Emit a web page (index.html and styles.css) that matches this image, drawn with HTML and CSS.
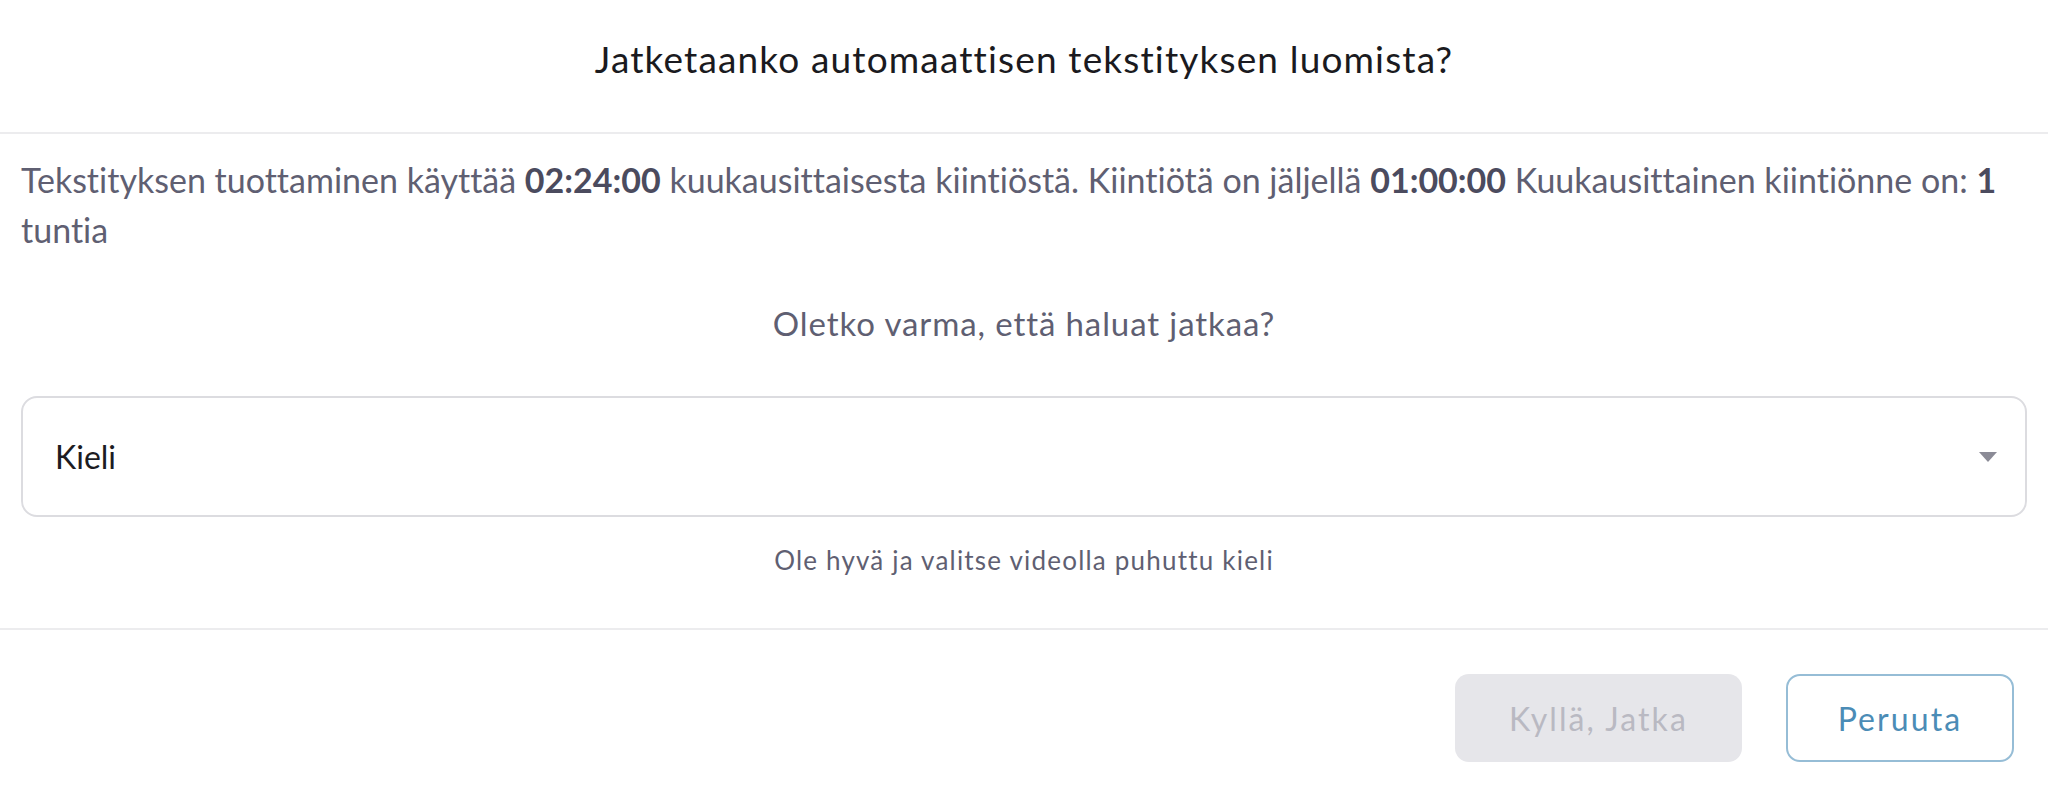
FILE: index.html
```html
<!DOCTYPE html>
<html lang="fi">
<head>
<meta charset="utf-8">
<title>Jatketaanko automaattisen tekstityksen luomista?</title>
<link rel="stylesheet" href="styles.css">
</head>
<body>
<div class="dialog">
  <header class="dialog-header">
    <h1 class="dialog-title">Jatketaanko automaattisen tekstityksen luomista?</h1>
  </header>
  <section class="dialog-body">
    <p class="quota-text">Tekstityksen tuottaminen käyttää <b>02:24:00</b> kuukausittaisesta kiintiöstä. Kiintiötä on jäljellä <b>01:00:00</b> Kuukausittainen kiintiönne on: <b>1</b> tuntia</p>
    <p class="confirm-text">Oletko varma, että haluat jatkaa?</p>
    <div class="select">
      <span class="select-label">Kieli</span>
      <svg class="select-arrow" width="18" height="10" viewBox="0 0 18 10"><path d="M0 0 H18 L9 10 Z" fill="#8b8b96"/></svg>
    </div>
    <p class="helper-text">Ole hyvä ja valitse videolla puhuttu kieli</p>
  </section>
  <footer class="dialog-footer">
    <button class="btn btn-disabled" disabled>Kyllä, Jatka</button>
    <button class="btn btn-outline">Peruuta</button>
  </footer>
</div>
</body>
</html>
```
FILE: styles.css
```css
html, body {
  margin: 0;
  padding: 0;
  background: #ffffff;
}
body {
  font-family: Lato, "Open Sans", sans-serif;
  font-variant-ligatures: none;
}
.dialog {
  width: 2048px;
  height: 797px;
  display: flex;
  flex-direction: column;
}
.dialog-header {
  height: 134px;
  box-sizing: border-box;
  padding-top: 37px;
  border-bottom: 2px solid #ececee;
  text-align: center;
}
.dialog-title {
  margin: 0;
  font-size: 37px;
  line-height: 44px;
  font-weight: 400;
  letter-spacing: 1.15px;
  color: #1a1a20;
}
.dialog-body {
  padding: 21px 21px 51px 21px;
  border-bottom: 2px solid #ececee;
}
.quota-text {
  margin: 0;
  font-size: 34px;
  line-height: 50px;
  font-weight: 400;
  color: #5f5f72;
}
.quota-text b {
  font-weight: 700;
  color: #4b4b5e;
}
.confirm-text {
  margin: 43px 0 0 0;
  text-align: center;
  font-size: 33px;
  line-height: 50px;
  letter-spacing: 0.9px;
  color: #5f5f72;
}
.select {
  margin-top: 48px;
  height: 121px;
  box-sizing: border-box;
  border: 2px solid #dcdce0;
  border-radius: 16px;
  display: flex;
  align-items: center;
  justify-content: space-between;
  padding: 0 28px 0 32px;
}
.select-label {
  font-size: 32px;
  color: #1c1c22;
}
.helper-text {
  margin: 26px 0 0 0;
  text-align: center;
  font-size: 26px;
  line-height: 34px;
  letter-spacing: 1.2px;
  color: #5f5f72;
}
.dialog-footer {
  display: flex;
  justify-content: flex-end;
  gap: 44px;
  padding: 44px 34px 0 0;
}
.btn {
  height: 88px;
  box-sizing: border-box;
  border-radius: 14px;
  font-family: Lato, "Open Sans", sans-serif;
  font-size: 32px;
  letter-spacing: 2.1px;
  padding: 0;
}
.btn-disabled {
  width: 287px;
  background: #e6e6ea;
  border: none;
  color: #b9b9c2;
}
.btn-outline {
  width: 228px;
  background: #ffffff;
  border: 2px solid #96bdd6;
  color: #4b8cb6;
}
```
